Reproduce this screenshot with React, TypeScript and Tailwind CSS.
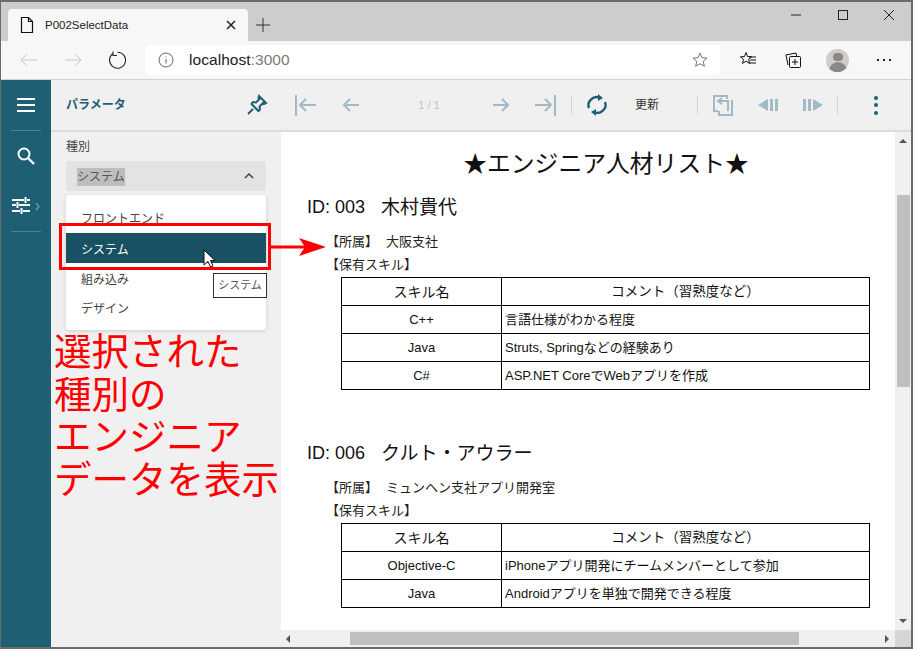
import { ReactNode } from "react";

const jp = "font-['Liberation_Sans','Noto_Sans_CJK_JP',sans-serif]";

const Sep = () => <div className="w-px h-5 bg-[#d4d4d4]" />;

const Icon = ({ children, w = 24, cls = "" }: { children: ReactNode; w?: number; cls?: string }) => (
  <svg width={w} height={24} viewBox={`0 0 ${w} 24`} fill="none" className={cls}>
    {children}
  </svg>
);

const BrowserChrome = () => (
  <div className="shrink-0">
    {/* tab strip */}
    <div className="h-[39px] bg-[#cdcdcd] flex items-end pl-[7px]">
      <div className="w-[240px] h-[32px] bg-[#f7f7f7] rounded-t-[4px] flex items-center pl-[11px] pr-[12px]">
        <svg width="16" height="18" viewBox="0 0 16 18" fill="none">
          <path d="M2.500 1.500h7l4 4v11h-11z M9.500 1.500v4h4" stroke="#111" strokeWidth="1.200" />
        </svg>
        <span className="ml-[10px] pt-px text-[11.500px] text-[#222]">P002SelectData</span>
        <svg width="10" height="10" viewBox="0 0 10 10" className="ml-auto">
          <path d="M1 1l8 8M9 1l-8 8" stroke="#222" strokeWidth="1.500" />
        </svg>
      </div>
      <svg width="14" height="14" viewBox="0 0 14 14" className="ml-[8px] mb-[9px]">
        <path d="M7 0v14M0 7h14" stroke="#333" strokeWidth="1" />
      </svg>
      <div className="ml-auto flex items-center mb-[20px] pr-[16px]">
        <svg width="12" height="12" viewBox="0 0 12 12" className="mr-[35px]">
          <path d="M1 6h10" stroke="#222" strokeWidth="1" />
        </svg>
        <svg width="12" height="12" viewBox="0 0 12 12" className="mr-[34px]">
          <rect x="1.500" y="1.500" width="9" height="9" stroke="#222" fill="none" />
        </svg>
        <svg width="12" height="12" viewBox="0 0 12 12">
          <path d="M1 1l10 10M11 1L1 11" stroke="#222" strokeWidth="1" />
        </svg>
      </div>
    </div>
    {/* address bar */}
    <div className="h-[39px] bg-[#f7f7f7] border-b border-[#d2d2d2] flex items-center">
      <svg width="18" height="14" viewBox="0 0 18 14" className="ml-[19px]">
        <path d="M17 7H1M7 1L1 7l6 6" stroke="#c9c9c9" strokeWidth="1" fill="none" />
      </svg>
      <svg width="18" height="14" viewBox="0 0 18 14" className="ml-[26px]">
        <path d="M1 7h16M11 1l6 6-6 6" stroke="#c9c9c9" strokeWidth="1" fill="none" />
      </svg>
      <svg width="18" height="18" viewBox="0 0 18 18" className="ml-[26px]">
        <path d="M5.500 2.300A8 8 0 1 0 9.500 1.200M5 0.500v4h4" stroke="#222" strokeWidth="1.100" fill="none" />
      </svg>
      <div className="ml-[19px] w-[575px] h-[30px] bg-white rounded-[4px] flex items-center pl-[13px] pr-[12px]">
        <svg width="16" height="16" viewBox="0 0 16 16">
          <circle cx="8" cy="8" r="7" stroke="#666" fill="none" />
          <path d="M8 7v4.500M8 4.500v1" stroke="#666" />
        </svg>
        <span className="ml-[15px] text-[15.500px] text-[#222] tracking-[0.05px]">
          localhost<span className="text-[#7a7a7a]">:3000</span>
        </span>
        <svg width="16" height="16" viewBox="0 0 16 16" className="ml-auto">
          <path d="M8 1l2 4.700 5 .4-3.800 3.300 1.200 4.900L8 11.700l-4.400 2.600 1.200-4.900L1 6.100l5-.4z" stroke="#777" fill="none" />
        </svg>
      </div>
      <svg width="18" height="18" viewBox="0 0 18 18" className="ml-[19px]">
        <path d="M7 1.500l1.600 4 4 .3-3 2.600 1 4L7 10.300l-3.500 2.100 1-4-3-2.600 4-.3z" stroke="#111" fill="none" />
        <path d="M10 6h7M11 9h6M10 12h7" stroke="#111" />
      </svg>
      <svg width="18" height="18" viewBox="0 0 18 18" className="ml-[27px]">
        <path d="M4 14l-2-10 10-2 .6 3" stroke="#111" fill="none" />
        <rect x="5.500" y="5.500" width="11" height="11" rx="1" stroke="#111" fill="#f7f7f7" />
        <path d="M11 8v6M8 11h6" stroke="#111" />
      </svg>
      <div className="ml-[24px] w-[23px] h-[23px] rounded-full bg-[#cfcdcb] overflow-hidden flex flex-col items-center">
        <div className="mt-[4px] w-[10px] h-[10px] rounded-full bg-[#8b8785]" />
        <div className="mt-[1px] w-[18px] h-[12px] rounded-t-full bg-[#8b8785]" />
      </div>
      <div className="ml-[28px] flex gap-[4px]">
        <div className="w-[2px] h-[2px] bg-[#222]" />
        <div className="w-[2px] h-[2px] bg-[#222]" />
        <div className="w-[2px] h-[2px] bg-[#222]" />
      </div>
    </div>
  </div>
);

const Toolbar = () => {
  const dim = "#a1bac5";
  const dark = "#1e5f74";
  return (
    <div className="h-[52px] bg-[#f0f0f0] border-b-2 border-[#dcdcdc] flex items-center pl-[15px] shrink-0">
      <span className="text-[12px] font-bold text-[#1e5f74] w-[180px]">パラメータ</span>
      <Icon cls="-ml-[1px]">
        <path d="M14 3l7 7-2 1-1-1-3.500 3.500.5 3-1.500 1.500-7-7L8 9l3 .5L14.500 6l-1-1z" stroke={dark} strokeWidth="2" fill="none" />
        <path d="M8 16l-5 5" stroke={dark} strokeWidth="2" />
      </Icon>
      <Icon cls="ml-[24px]">
        <path d="M3 2v21" stroke={dim} strokeWidth="2" />
        <path d="M23 12H7M13 6l-6 6 6 6" stroke={dim} strokeWidth="2" />
      </Icon>
      <Icon cls="ml-[22px]">
        <path d="M20 12H5M11 6l-6 6 6 6" stroke={dim} strokeWidth="2" />
      </Icon>
      <span className="ml-[45px] w-[42px] text-center text-[11px] text-[#b5c5cc]">1 / 1</span>
      <Icon cls="ml-[39px]">
        <path d="M4 12h15M13 6l6 6-6 6" stroke={dim} strokeWidth="2" />
      </Icon>
      <Icon cls="ml-[21px]">
        <path d="M21 2v21" stroke={dim} strokeWidth="2" />
        <path d="M1 12h16M11 6l6 6-6 6" stroke={dim} strokeWidth="2" />
      </Icon>
      <div className="ml-[13px]"><Sep /></div>
      <Icon cls="ml-[13px]">
        <path d="M4 15a8 8 0 0 1 11-10M20 9a8 8 0 0 1-11 10" stroke={dark} strokeWidth="2.400" fill="none" />
        <path d="M13 1l5 4-5 3zM11 23l-5-4 5-3z" fill={dark} />
      </Icon>
      <span className="ml-[26px] text-[12px] text-[#333] w-[62px]">更新</span>
      <Sep />
      <Icon cls="ml-[11px]">
        <path d="M18 6V3H5v15h4" stroke={dim} strokeWidth="2" fill="none" />
        <path d="M23 7v15H10v-4M13 5L9 8l4 3M9 8h10v10" stroke={dim} strokeWidth="2" fill="none" />
      </Icon>
      <Icon cls="ml-[23px]">
        <path d="M2 12l10-6v12z" fill={dim} />
        <path d="M14 6h3v12h-3zM19 6h3v12h-3z" fill={dim} />
      </Icon>
      <Icon cls="ml-[21px]">
        <path d="M2 6h3v12H2zM7 6h3v12H7z" fill={dim} />
        <path d="M12 6l10 6-10 6z" fill={dim} />
      </Icon>
      <div className="ml-[12px]"><Sep /></div>
      <div className="ml-[36px] flex flex-col gap-[3.500px]">
        <div className="w-1 h-1 rounded-full bg-[#1e5f74]" />
        <div className="w-1 h-1 rounded-full bg-[#1e5f74]" />
        <div className="w-1 h-1 rounded-full bg-[#1e5f74]" />
      </div>
    </div>
  );
};

const SideRail = () => (
  <div className="w-[50px] shrink-0 bg-[#1e5f74] flex flex-col items-center">
    <div className="h-[50px] flex items-center justify-center w-full">
      <div className="flex flex-col gap-[4px]">
        <div className="w-[18px] h-[2px] bg-white" />
        <div className="w-[18px] h-[2px] bg-white" />
        <div className="w-[18px] h-[2px] bg-white" />
      </div>
    </div>
    <div className="w-[30px] h-px bg-[#4a8294]" />
    <div className="h-[50px] flex items-center justify-center">
      <svg width="20" height="20" viewBox="0 0 20 20" fill="none">
        <circle cx="8" cy="8" r="5.500" stroke="white" strokeWidth="2" />
        <path d="M12 12l6 6" stroke="white" strokeWidth="2.400" />
      </svg>
    </div>
    <div className="h-[50px] w-full flex items-center pl-[11px]">
      <svg width="30" height="20" viewBox="0 0 30 20" fill="none">
        <path d="M0 4h12M15 4h3M0 9h4M7 9h11M0 15h8M11 15h7" stroke="white" strokeWidth="2" />
        <path d="M13.500 1v6M5.500 6v6M9.500 12v6" stroke="white" strokeWidth="2" />
        <path d="M24 7l3 3.500-3 3.500" stroke="#6d97a6" strokeWidth="1.400" />
      </svg>
    </div>
    <div className="w-[30px] h-px bg-[#4a8294]" />
  </div>
);

const ParamPanel = () => (
  <div className="w-[230px] shrink-0 bg-[#f0f0f0] px-[15px] pt-[6px] relative">
    <div className="text-[12px] text-[#444] leading-[18px]">種別</div>
    <div className="mt-[5px] h-[30px] bg-[#e3e3e3] rounded-[3px] flex items-center pl-[11px] pr-[12px]">
      <span className="text-[12px] text-[#555] bg-[#bdbdbd] translate-y-px">システム</span>
      <svg width="10" height="6" viewBox="0 0 10 6" className="ml-auto" fill="none">
        <path d="M1 5l4-4 4 4" stroke="#444" strokeWidth="1.500" />
      </svg>
    </div>
    <div className="mt-[4px] bg-white rounded-[3px] shadow-[0_1px_4px_rgba(0,0,0,0.15)] pt-[8px] pb-[7px] text-[12px]">
      <div className="h-[30px] flex items-center pl-[15px] pt-[2px] text-[#444]">フロントエンド</div>
      <div className="h-[30px] flex items-center pl-[15px] pt-[3px] bg-[#1a5064] text-white">システム</div>
      <div className="h-[30px] flex items-center pl-[15px] pt-[3px] text-[#444]">組み込み</div>
      <div className="h-[30px] flex items-center pl-[15px] pt-[2px] text-[#444]">デザイン</div>
    </div>
    {/* annotation over the list */}
    <div className="absolute left-[8px] top-[91px] w-[212px] h-[47px] border-[3px] border-[#ff0000]" />
    <svg width="16" height="20" viewBox="0 0 16 20" className="absolute left-[152px] top-[117px]">
      <path d="M1 1v15l4-3.500 2.500 5.500 2.500-1-2.500-5.500H12z" fill="white" stroke="#111" strokeWidth="1" />
    </svg>
    <div className="absolute left-[162px] top-[141px] w-[54px] h-[25px] border border-[#333] bg-white text-[11px] text-[#555] flex items-center justify-center">
      システム
    </div>
    <svg width="55" height="20" viewBox="0 0 55 20" className="absolute left-[220px] top-[105px] z-10 overflow-visible">
      <path d="M0 10h34" stroke="#ff0000" strokeWidth="3" />
      <path d="M55 10L28 1l6 9-6 9z" fill="#ff0000" />
    </svg>
    <div className="absolute left-[3px] top-[199px] text-[37.500px] leading-[42.500px] text-[#ff0000] whitespace-nowrap z-10">
      選択された
      <br />
      種別の
      <br />
      エンジニア
      <br />
      データを表示
    </div>
  </div>
);

const SkillTable = ({ rows }: { rows: [string, string][] }) => (
  <table className="ml-[34px] w-[529px] border-collapse table-fixed border border-black text-[13px] text-[#111]">
    <thead>
      <tr className="h-[28px]">
        <th className="w-[160px] border border-black font-normal text-[14px] pt-px">スキル名</th>
        <th className="border border-black font-normal text-[13.500px] pt-px">コメント（習熟度など）</th>
      </tr>
    </thead>
    <tbody>
      {rows.map(([a, b]) => (
        <tr key={a} className="h-[28px]">
          <td className="border border-black text-center">{a}</td>
          <td className="border border-black px-[3px]">{b}</td>
        </tr>
      ))}
    </tbody>
  </table>
);

const Engineer = ({ id, name, dept, rows }: { id: string; name: string; dept: string; rows: [string, string][] }) => (
  <div>
    <div className="flex items-baseline h-[34px] pl-[26px]">
      <span className="text-[18px] text-[#111]">ID: {id}</span>
      <span className="ml-[16px] text-[19px] text-[#111] translate-y-[1px]">{name}</span>
    </div>
    <div className="pl-[45px] text-[13px] text-[#222] mt-[3px] leading-[23px]">
      <div>
        【所属】<span className="ml-[8px]">{dept}</span>
      </div>
      <div>【保有スキル】</div>
    </div>
    <div className="pl-[26px] mt-px">
      <SkillTable rows={rows} />
    </div>
  </div>
);

const Report = () => (
  <div className="flex-1 min-w-0 bg-white flex flex-col">
    <div className="flex flex-1 min-h-0">
      <div className="flex-1 min-w-0 overflow-hidden">
        <h1 className="text-center text-[23.800px] leading-[30px] text-[#111] pt-[17px] pl-[36px] mb-[14px]">
          ★エンジニア人材リスト★
        </h1>
        <Engineer
          id="003"
          name="木村貴代"
          dept="大阪支社"
          rows={[
            ["C++", "言語仕様がわかる程度"],
            ["Java", "Struts, Springなどの経験あり"],
            ["C#", "ASP.NET CoreでWebアプリを作成"],
          ]}
        />
        <div className="h-[49px]" />
        <Engineer
          id="006"
          name="クルト・アウラー"
          dept="ミュンヘン支社アプリ開発室"
          rows={[
            ["Objective-C", "iPhoneアプリ開発にチームメンバーとして参加"],
            ["Java", "Androidアプリを単独で開発できる程度"],
          ]}
        />
      </div>
      {/* vertical scrollbar */}
      <div className="w-[16px] shrink-0 bg-[#f0f0f0] flex flex-col items-center justify-between py-[7px] relative">
        <div className="w-0 h-0 border-x-[4px] border-x-transparent border-b-[4px] border-b-[#555]" />
        <div className="absolute left-[2px] right-[1px] top-[63px] h-[192px] bg-[#bfbfbf]" />
        <div className="w-0 h-0 border-x-[4px] border-x-transparent border-t-[4px] border-t-[#555]" />
      </div>
    </div>
    {/* horizontal scrollbar */}
    <div className="h-[17px] shrink-0 bg-[#f0f0f0] flex items-center">
      <div className="w-[614px] h-full flex items-center pl-[5px] pr-[6px] justify-between relative">
        <div className="w-0 h-0 border-y-[4px] border-y-transparent border-r-[4px] border-r-[#555]" />
        <div className="absolute left-[69px] w-[449px] top-[2px] h-[13px] bg-[#bfbfbf]" />
        <div className="w-0 h-0 border-y-[4px] border-y-transparent border-l-[4px] border-l-[#555]" />
      </div>
      <div className="flex-1 h-full bg-[#d6d6d6]" />
    </div>
  </div>
);

export default function App() {
  return (
    <div className={`w-[913px] h-[649px] overflow-hidden flex flex-col bg-[#f0f0f0] border-t-2 border-r-2 border-b-2 border-l border-[#6b6b6b] ${jp}`}>
      <BrowserChrome />
      <div className="flex-1 min-h-0 flex">
        <SideRail />
        <div className="flex-1 min-w-0 flex flex-col">
          <Toolbar />
          <div className="flex-1 min-h-0 flex">
            <ParamPanel />
            <Report />
          </div>
        </div>
      </div>
    </div>
  );
}
